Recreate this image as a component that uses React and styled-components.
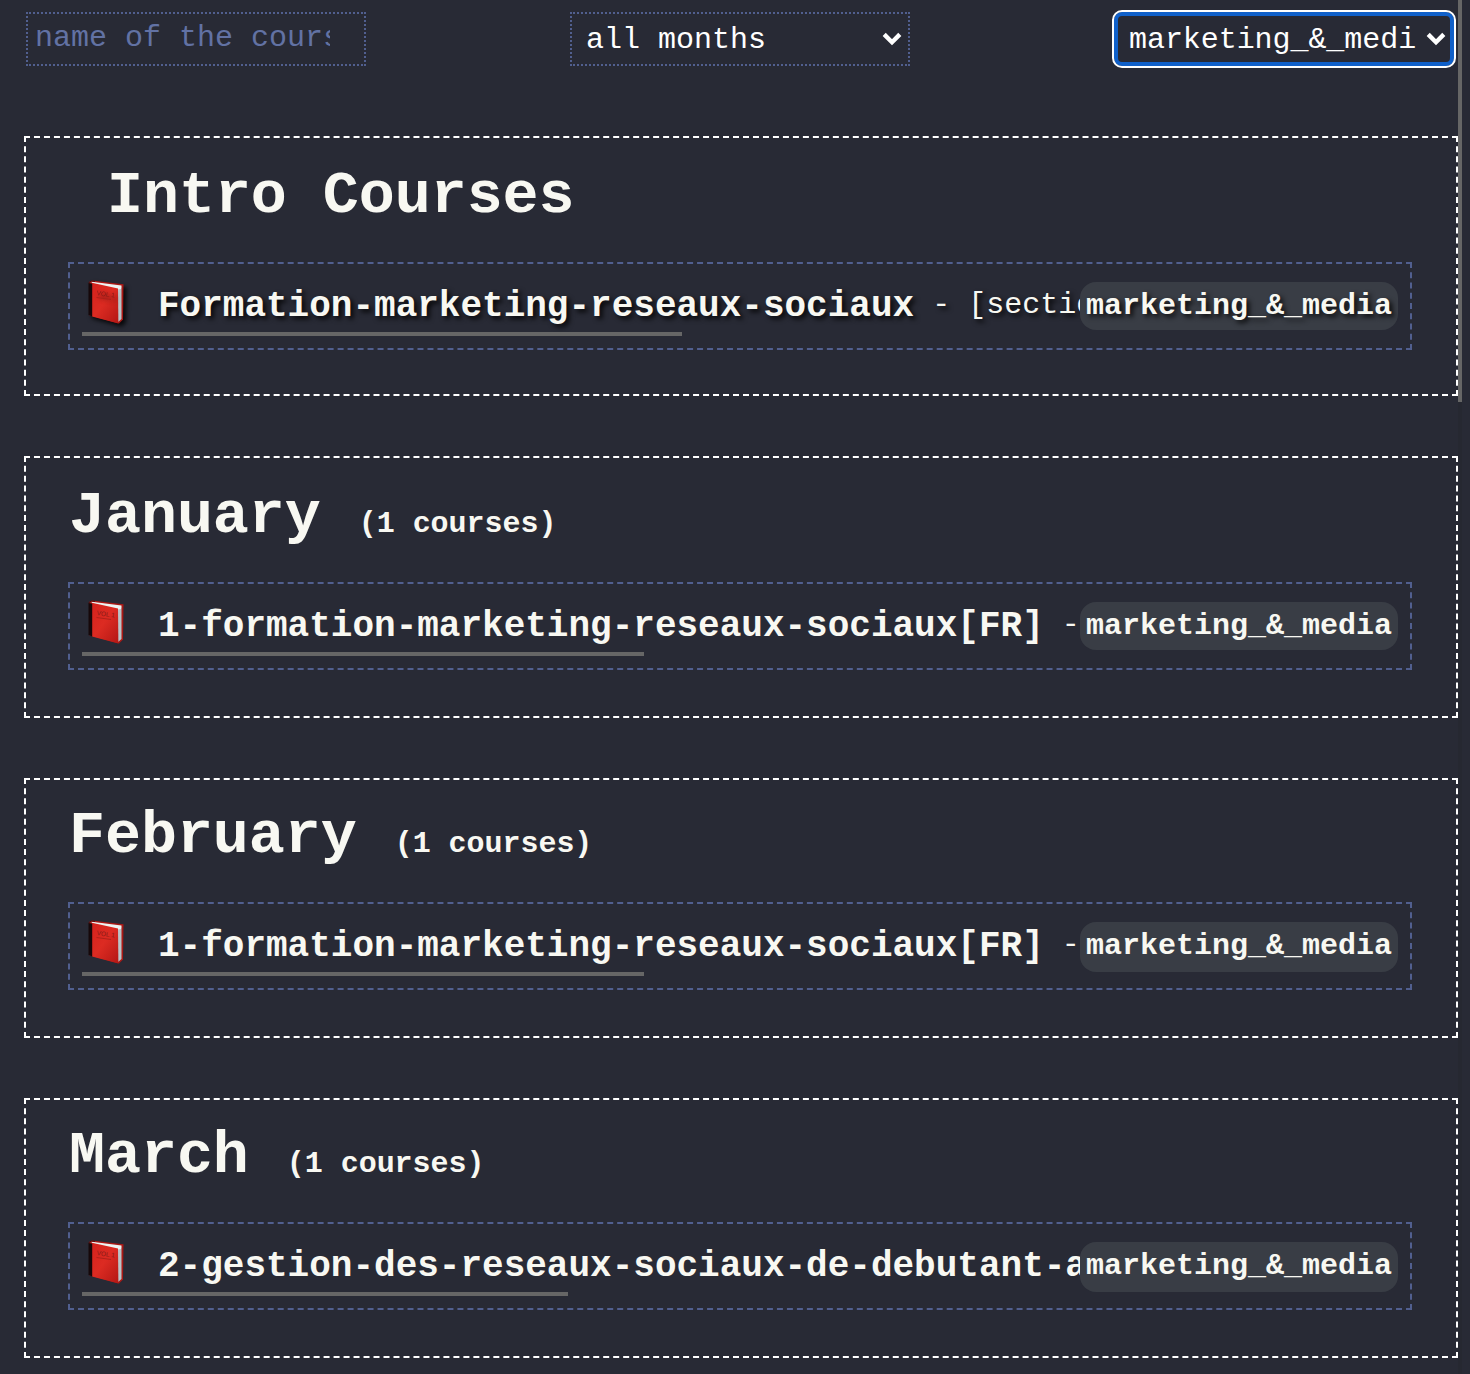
import React from "react";
import styled, { createGlobalStyle } from "styled-components";

const GlobalStyle = createGlobalStyle`
  * { box-sizing: border-box; }
  html, body { margin: 0; background: #282a35; overflow: hidden; }
  body { font-family: "Courier New", "Liberation Mono", monospace; color: #f8f8f2; }
`;

const Page = styled.div`
  position: relative;
  height: 1374px;
  overflow: hidden;
  background: #282a35;
`;

const Filters = styled.header`
  display: flex;
  justify-content: space-between;
  height: 136px;
  padding: 12px 16px 0 26px;
`;

const Field = styled.div`
  width: 340px;
  height: 54px;
  border: 2px dotted #515f8f;
  display: flex;
  align-items: center;
  font-size: 30px;
  line-height: 36px;
  white-space: pre;
`;

const SearchField = styled(Field)`
  padding: 0 34px 2px 7px;
  color: #6272a4;
`;

const SelectField = styled(Field)`
  padding: 0 6px 0 14px;
  justify-content: space-between;
  color: #fff;
  ${(p) => p.$focused && `
    border: 4px solid #1060c9;
    border-radius: 8px;
    outline: 2px solid #fff;
    padding: 0 4px 0 11px;
    letter-spacing: -0.06px;
  `}
`;

const Clip = styled.span`
  overflow: hidden;
`;

const SelectText = styled(Clip)`
  padding-top: 2px;
`;

const Sections = styled.main`
  padding: 0 12px 0 24px;
`;

const Section = styled.section`
  height: ${(p) => p.$height}px;
  margin-bottom: 60px;
  padding: 0 44px 0 42px;
  border: 2px dashed #fff;
`;

const Heading = styled.h1`
  display: flex;
  align-items: baseline;
  height: ${(p) => p.$height}px;
  margin: 0;
  padding: ${(p) => p.$height - 100}px 0 0 ${(p) => (p.$indent ? 39 : 1)}px;
  font-size: 60px;
  line-height: 68px;
  font-weight: 700;
  letter-spacing: -0.04px;
  white-space: pre;
`;

const Count = styled.span`
  margin-left: 38px;
  font-size: 30px;
`;

const Course = styled.article`
  position: relative;
  height: 88px;
  padding: 0 12px;
  border: 2px dashed #515f8f;
  text-shadow: ${(p) => (p.$hovered ? "3px 3px 5px rgba(0, 0, 0, 0.85)" : "none")};
`;

const CourseLine = styled.div`
  display: flex;
  align-items: center;
  height: 68px;
  margin-right: 318px;
  padding: 17px 0 0 4px;
  overflow: hidden;
  white-space: pre;
`;

const BookIcon = styled.svg`
  flex: none;
  width: 42px;
  height: 50px;
  margin: -8px 30px 0 0;
  filter: ${(p) => (p.$hovered ? "drop-shadow(3px 3px 2px rgba(0, 0, 0, 0.8))" : "none")};
`;

const Title = styled.strong`
  flex: none;
  font-size: 36px;
  line-height: 42px;
`;

const Detail = styled.span`
  flex: none;
  font-size: 30px;
  line-height: 36px;
  margin-top: -4px;
`;

const Progress = styled.div`
  width: ${(p) => p.$width}px;
  height: 4px;
  background: #666;
`;

const Badge = styled.span`
  position: absolute;
  top: 18px;
  right: 12px;
  width: 318px;
  height: ${(p) => p.$height}px;
  padding-left: 6px;
  border-radius: 16px;
  background: #393d45;
  font-size: 30px;
  line-height: 48px;
  font-weight: 700;
  white-space: pre;
`;

const ScrollTrack = styled.div`
  position: absolute;
  top: 0;
  right: 8px;
  width: 4px;
  height: 100%;
  background: #262831;
`;

const ScrollThumb = styled.div`
  height: 402px;
  background: #666;
`;

const ChevronIcon = styled.svg`
  flex: none;
  width: 20px;
  height: 14px;
`;

const Chevron = () => (
  <ChevronIcon viewBox="0 0 20 14">
    <path d="M2.2 2.4 10 10.2 17.8 2.4" fill="none" stroke="#fff" strokeWidth="4.4" />
  </ChevronIcon>
);

const Book = ({ hovered }) => (
  <BookIcon viewBox="0 0 42 50" $hovered={hovered}>
    <defs>
      <linearGradient id="cover" x1="0" y1="0" x2="1" y2="1">
        <stop offset="0" stopColor="#d4211c" />
        <stop offset=".5" stopColor="#dc2b22" />
        <stop offset="1" stopColor="#b31714" />
      </linearGradient>
    </defs>
    <path d="M3 4 6 2.5 37.5 6.2 37 41.5 33 45.5 4 37.5Z" fill="#a91815" />
    <path d="M6 4.2 35.5 8.5 35.5 41 32 44Z" fill="#b9c4c8" />
    <path d="M5.5 3.8 35.5 7.6 35 11 31.8 11.6 6 5.2Z" fill="#eef3f2" />
    <path d="M3 4.5 7 5 32 10.4 32.4 45.6 7 38.8 3 37Z" fill="url(#cover)" />
    <path d="M2.5 5 6.2 5.6 6.2 38.4 2.5 37Z" fill="#16080a" />
    <path d="M2.5 5 5.5 3 9 3.3" fill="none" stroke="#45110f" />
    <text x="10.5" y="17" transform="rotate(8 10 17)" fontFamily="Liberation Sans, sans-serif" fontSize="6.5" fill="#851b18">VOL 1</text>
    <path d="M10.5 19.5 25 21.5" stroke="#a91f1a" strokeWidth=".9" />
  </BookIcon>
);

const months = [
  { name: "Intro Courses", intro: true, height: 260, head: 124, title: "Formation-marketing-reseaux-sociaux", detail: " - [sectio", width: 600, badge: 48, hovered: true },
  { name: "January", height: 262, head: 124, title: "1-formation-marketing-reseaux-sociaux[FR]", detail: " -", width: 562, badge: 48 },
  { name: "February", height: 260, head: 122, title: "1-formation-marketing-reseaux-sociaux[FR]", detail: " -", width: 562, badge: 50 },
  { name: "March", height: 260, head: 122, title: "2-gestion-des-reseaux-sociaux-de-debutant-a", detail: "", width: 486, badge: 50 },
];

export default function App() {
  return (
    <Page>
      <GlobalStyle />
      <ScrollTrack><ScrollThumb /></ScrollTrack>
      <Filters>
        <SearchField><Clip>name of the course</Clip></SearchField>
        <SelectField><SelectText>all months</SelectText><Chevron /></SelectField>
        <SelectField $focused><SelectText>marketing_&amp;_medi</SelectText><Chevron /></SelectField>
      </Filters>
      <Sections>
        {months.map((m) => (
          <Section key={m.name} $height={m.height}>
            <Heading $height={m.head} $indent={m.intro}>
              {m.name}
              {!m.intro && <Count>(1 courses)</Count>}
            </Heading>
            <Course $hovered={m.hovered}>
              <CourseLine>
                <Book hovered={m.hovered} />
                <Title>{m.title}</Title>
                <Detail>{m.detail}</Detail>
              </CourseLine>
              <Progress $width={m.width} />
              <Badge $height={m.badge}>marketing_&amp;_media</Badge>
            </Course>
          </Section>
        ))}
      </Sections>
    </Page>
  );
}
